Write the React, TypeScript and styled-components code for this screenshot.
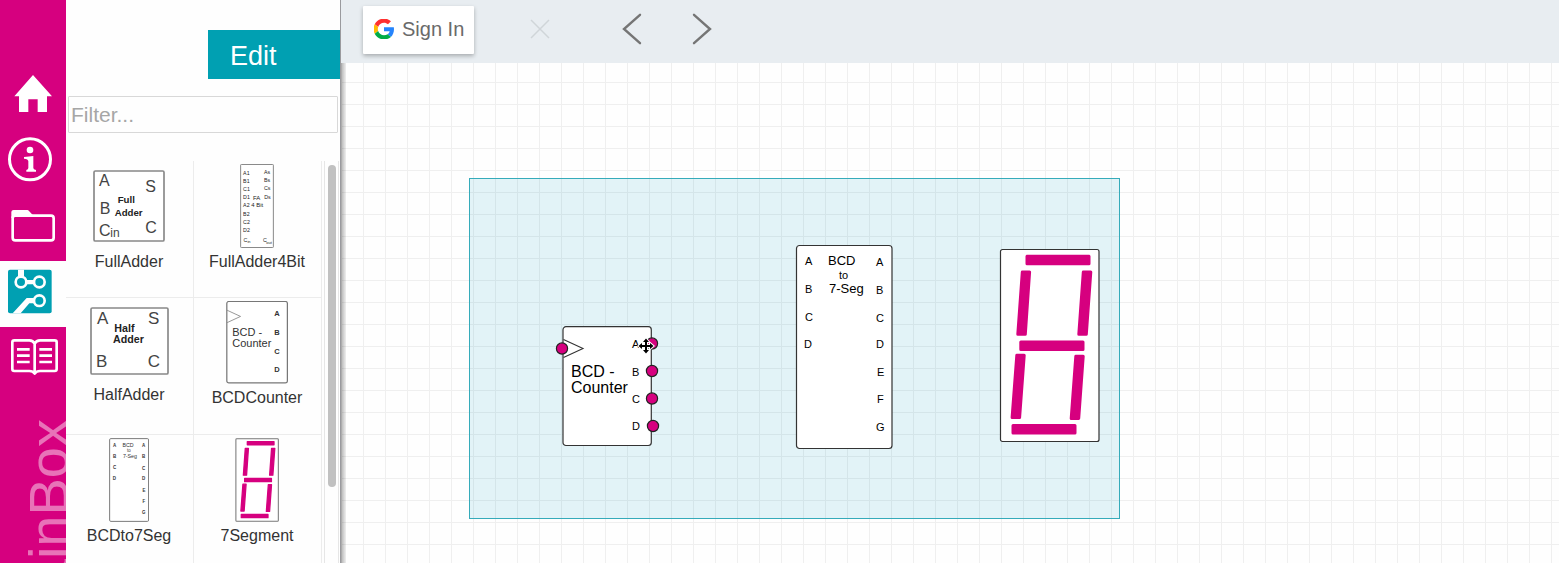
import React from "react";
import styled, { createGlobalStyle, css } from "styled-components";

const pink = "#d6007f";
const teal = "#00a0b2";
const sans = '"Liberation Sans", Arial, Helvetica, sans-serif';

const GlobalStyle = createGlobalStyle`
  *, *::before, *::after { box-sizing: border-box; }
  body { margin: 0; font-family: ${sans}; background: #fefefe; color: #333; }
  button, input { font-family: inherit; }
  svg { display: block; }
  svg text { font-family: ${sans}; }
`;

/* ---------- page frame ---------- */

const Page = styled.div`
  display: flex;
  height: 100vh;
  overflow: hidden;
`;

const Sidebar = styled.nav`
  flex: none;
  display: flex;
  flex-direction: column;
  width: 66px;
  padding-top: 63px;
  background: ${pink};
  overflow: hidden;
`;

const NavLink = styled.a<{ $active?: boolean }>`
  flex: none;
  height: 66px;
  color: #fff;
  ${(p) => p.$active && css`background: #fefefe;`}
  svg { width: 66px; height: 66px; }
`;

const Brand = styled.div`
  flex: none;
  align-self: flex-start;
  margin: 26px 0 0 17px;
  writing-mode: vertical-rl;
  transform: rotate(180deg);
  font-size: 56px;
  line-height: 64px;
  white-space: nowrap;
  color: rgba(255, 255, 255, 0.45);
`;

const Panel = styled.aside`
  flex: none;
  display: flex;
  flex-direction: column;
  width: 275px;
  padding-top: 30px;
  background: #fefefe;
  border-right: 1px solid #9a9a9e;
`;

const EditButton = styled.button`
  flex: none;
  align-self: flex-end;
  width: 132px;
  height: 49px;
  padding: 2px 22px 0;
  border: 0;
  background: ${teal};
  color: #fff;
  font-size: 27px;
  line-height: 32px;
  text-align: left;
`;

const FilterInput = styled.input`
  flex: none;
  height: 37px;
  margin: 17px 2px 28px;
  padding: 0 2px;
  border: 1px solid #d8d8d8;
  border-radius: 1px;
  background: #fefefe;
  font-size: 21px;
  color: #333;
  &::placeholder { color: #a6a6a6; opacity: 1; }
`;

const Library = styled.div`
  flex: 1;
  min-height: 0;
  display: flex;
  gap: 2px;
`;

const PartGrid = styled.ul`
  display: grid;
  grid-template-columns: 128px 128px;
  grid-auto-rows: 137px;
  margin: 0;
  padding: 0;
  list-style: none;
  overflow: hidden;
`;

const PartCell = styled.li`
  display: flex;
  flex-direction: column;
  align-items: center;
  padding: 3px 1px 0 0;
  border-right: 1px solid #ececec;
  border-bottom: 1px solid #ececec;
`;

const Thumb = styled.div<{ $height: number }>`
  display: flex;
  align-items: center;
  height: ${(p) => p.$height}px;
  margin-bottom: 4px;
`;

const PartName = styled.span`
  font-size: 16px;
  line-height: 20px;
  white-space: nowrap;
`;

const ScrollTrack = styled.div`
  width: 15px;
  padding: 4px 2px 0 3px;
  border: solid #e6e6e6;
  border-width: 0 1px;
`;

const ScrollThumb = styled.div`
  width: 8px;
  height: 81%;
  border-radius: 4px;
  background: #c1c1c1;
`;

const Main = styled.main`
  flex: 1;
  min-width: 0;
  display: flex;
  flex-direction: column;
`;

const Toolbar = styled.header`
  flex: none;
  display: flex;
  align-items: flex-start;
  height: 63px;
  padding: 6px 22px 0;
  background: #e8edf1;
`;

const SignIn = styled.button`
  display: flex;
  align-items: center;
  gap: 8px;
  height: 48px;
  padding: 0 10px 2px 11px;
  margin-right: 47px;
  border: 0;
  border-radius: 1px;
  background: #fff;
  box-shadow: 0 2px 4px rgba(0, 0, 0, 0.28);
  color: #6a6a6a;
  font-size: 20px;
  line-height: 24px;
  white-space: nowrap;
`;

const ToolButton = styled.button<{ $faint?: boolean }>`
  display: flex;
  align-items: center;
  justify-content: center;
  width: 38px;
  height: 45px;
  padding: 0;
  border: 0;
  background: none;
  color: ${(p) => (p.$faint ? "#d0d5d9" : "#757575")};
`;

const ToolGroup = styled.div`
  display: flex;
  gap: 32px;
  margin-left: 54px;
`;

/* ---------- drawing area ---------- */

const Canvas = styled.section`
  position: relative;
  flex: 1;
  overflow: hidden;
  background-color: #fefefe;
  background-image:
    linear-gradient(to right, #efefef 1px, transparent 1px),
    linear-gradient(to bottom, #efefef 1px, transparent 1px);
  background-size: 22px 22px;
  background-position: 0 19px;

  &::before {
    content: "";
    position: absolute;
    inset: 0 auto 0 0;
    width: 5px;
    background: linear-gradient(to right, rgba(0, 0, 0, 0.3), rgba(0, 0, 0, 0.06));
  }
`;

const Selection = styled.div`
  position: absolute;
  left: 128px;
  top: 115px;
  width: 651px;
  height: 341px;
  border: 1px solid #35abba;
  background: rgba(0, 152, 188, 0.11);
`;

const Node = styled.div<{ $x: number; $y: number }>`
  position: absolute;
  left: ${(p) => p.$x}px;
  top: ${(p) => p.$y}px;
`;

/* ---------- circuit parts ---------- */

type PartProps = { width: number; height: number; small?: boolean; ports?: boolean };

const lineOf = (small?: boolean) => (small ? "#777" : "#333");
const inkOf = (small?: boolean) => (small ? "#333" : "#000");

type Label = [string, number, number];

const Labels = ({ items, size, bold }: { items: Label[]; size: number; bold?: boolean }) => (
  <g fontSize={size} fontWeight={bold ? 700 : 400}>
    {items.map(([t, x, y], i) => (
      <text key={i} x={x} y={y}>{t}</text>
    ))}
  </g>
);

const Counter = ({ width, height, small, ports }: PartProps) => (
  <svg width={width} height={height} viewBox={ports ? "-8 -1 106 121" : "-1 -1 90 121"}>
    <rect x="0" y="-0.3" width="88.3" height="118.8" rx="3" fill="#fff" stroke={lineOf(small)} strokeWidth={small ? 1.8 : 1.2} />
    <path d="M0.5 12.5 L20 21.5 L0.5 30.5" fill="none" stroke={lineOf(small)} strokeWidth="1.1" />
    <g fill={inkOf(small)}>
      <Labels size={16} items={[["BCD -", 8, 50], ["Counter", 8, 66]]} />
      <Labels size={11} bold={small} items={[["A", 69, 21], ["B", 69, 49], ["C", 69, 76], ["D", 69, 103]]} />
    </g>
    {ports && (
      <g fill={pink} stroke="#222" strokeWidth="1.2">
        <circle cx="-1" cy="21.5" r="5.6" />
        <circle cx="89" cy="16.5" r="5.6" />
        <circle cx="89" cy="44" r="5.6" />
        <circle cx="89" cy="71.5" r="5.6" />
        <circle cx="90" cy="99" r="5.6" />
      </g>
    )}
  </svg>
);

const Decoder = ({ width, height, small }: PartProps) => (
  <svg width={width} height={height} viewBox="-1 -1 98 206">
    <rect x="0.5" y="0.5" width="95.5" height="203" rx="3" fill="#fff" stroke={lineOf(small)} strokeWidth={small ? 2.4 : 1.2} />
    <g fill={inkOf(small)}>
      <Labels
        size={11}
        bold={small}
        items={[
          ["A", 9, 20], ["B", 9, 48], ["C", 9, 76], ["D", 8, 103],
          ["A", 80, 21], ["B", 80, 49], ["C", 80, 77], ["D", 80, 103],
          ["E", 81, 131], ["F", 81, 158], ["G", 80, 186],
        ]}
      />
      <Labels size={13} items={[["BCD", 32, 20], ["7-Seg", 33, 48]]} />
      <Labels size={11} items={[["to", 43, 34]]} />
    </g>
  </svg>
);

const SevenSegment = ({ width, height, small }: PartProps) => (
  <svg width={width} height={height} viewBox="-1 -1 101 195">
    <rect x="0.5" y="0.5" width="98.5" height="192" rx="2" fill="#fff" stroke={lineOf(small)} strokeWidth={small ? 2.4 : 1.2} />
    <g fill={pink} stroke={pink} strokeWidth="3" strokeLinejoin="round">
      <path d="M27 7.3H89V14.7H27Z" />
      <path d="M20.8 93H83V100.4H20.8Z" />
      <path d="M13 176.5H75V184H13Z" />
      <path d="M22.3 23H29.6L25.3 85.3H17.8Z" />
      <path d="M83.3 23H90.8L86.3 85.3H78.8Z" />
      <path d="M16.8 106.3H24.2L19.6 168.6H12.1Z" />
      <path d="M75.8 107.3H83.2L78.7 169.5H71.2Z" />
    </g>
  </svg>
);

const FullAdder = ({ width, height }: PartProps) => (
  <svg width={width} height={height} viewBox="0 0 216 216">
    <rect x="3" y="3" width="210" height="210" rx="4" fill="#fff" stroke="#888" strokeWidth="5" />
    <g fill="#444">
      <Labels size={48} items={[["A", 18, 47], ["S", 157, 66], ["B", 20, 132], ["C", 157, 190], ["C", 18, 199]]} />
      <Labels size={36} items={[["in", 52, 202]]} />
    </g>
    <g fill="#222">
      <Labels size={29} bold items={[["Full", 74, 98], ["Adder", 65, 137]]} />
    </g>
  </svg>
);

const HalfAdder = ({ width, height }: PartProps) => (
  <svg width={width} height={height} viewBox="0 0 237 204">
    <rect x="3" y="3" width="231" height="198" rx="4" fill="#fff" stroke="#888" strokeWidth="5" />
    <g fill="#444">
      <Labels size={51} items={[["A", 21, 51], ["S", 174, 51], ["B", 18, 181], ["C", 173, 181]]} />
    </g>
    <g fill="#222">
      <Labels size={32} bold items={[["Half", 73, 76], ["Adder", 69, 108]]} />
    </g>
  </svg>
);

const FullAdder4Bit = ({ width, height }: PartProps) => (
  <svg width={width} height={height} viewBox="0 0 102 254">
    <rect x="1.5" y="1.5" width="99" height="251" rx="2" fill="#fff" stroke="#888" strokeWidth="3" />
    <g fill="#222">
      <Labels
        size={16}
        items={[
          ["A1", 9, 32], ["B1", 9, 57], ["C1", 9, 81], ["D1", 9, 106], ["A2", 9, 130],
          ["B2", 9, 157], ["C2", 9, 181], ["D2", 9, 207], ["C", 10, 236],
          ["As", 72, 31], ["Bs", 72, 55], ["Cs", 72, 80], ["Ds", 73, 106], ["C", 69, 236],
        ]}
      />
      <Labels size={18} items={[["FA", 39, 109], ["4 Bit", 34, 130]]} />
      <Labels size={12} items={[["in", 22, 239], ["out", 79, 243]]} />
    </g>
  </svg>
);

const parts = [
  { name: "FullAdder", area: 84, art: <FullAdder width={72} height={72} /> },
  { name: "FullAdder4Bit", area: 84, art: <FullAdder4Bit width={34} height={84} /> },
  { name: "HalfAdder", area: 80, art: <HalfAdder width={79} height={68} /> },
  { name: "BCDCounter", area: 83, art: <Counter width={62} height={83} small /> },
  { name: "BCDto7Seg", area: 84, art: <Decoder width={40} height={84} small /> },
  { name: "7Segment", area: 84, art: <SevenSegment width={44} height={84} small /> },
];

/* ---------- icons ---------- */

const HomeIcon = () => (
  <svg viewBox="0 0 198 198" fill="currentColor" aria-hidden="true">
    <path d="M99 36L156 100H141V147H113V109H85V147H57V100H43Z" />
  </svg>
);

const InfoIcon = () => (
  <svg viewBox="0 0 198 198" fill="currentColor" aria-hidden="true">
    <circle cx="90" cy="91" r="61.5" fill="none" stroke="currentColor" strokeWidth="9" />
    <circle cx="90" cy="63" r="10" />
    <path d="M72 84Q88 83 100 81V117Q100 122 108 123V128H79V123Q85 122 85 117V97Q85 90 72 89Z" />
  </svg>
);

const FolderIcon = () => (
  <svg viewBox="0 0 198 198" fill="none" stroke="currentColor" strokeWidth="8" aria-hidden="true">
    <rect x="38" y="62" width="123" height="74" rx="8" />
    <path d="M34 70V51Q34 45 41 45H82Q85 45 87 48L99 61V66H41Z" fill="currentColor" stroke="none" />
  </svg>
);

const CircuitIcon = () => (
  <svg viewBox="0 0 198 198" aria-hidden="true">
    <rect x="24" y="26" width="131" height="131" rx="6" fill={teal} />
    <path d="M54 26H72V50H54Z M76 57H106V70H76Z M106 111H80L38 157H62L88 127H106Z" fill="#fefefe" />
    <g fill={teal} stroke="#fefefe" strokeWidth="8">
      <circle cx="63" cy="63" r="16" />
      <circle cx="118" cy="63" r="16" />
      <circle cx="118" cy="119" r="16" />
    </g>
  </svg>
);

const BookIcon = () => (
  <svg viewBox="0 0 198 198" fill="none" stroke="currentColor" strokeWidth="8" strokeLinejoin="round" aria-hidden="true">
    <path d="M104 50Q99 40 88 40H43Q37 40 37 46V126Q37 132 43 132H88Q99 132 104 140Q109 132 120 132H164Q170 132 170 126V46Q170 40 164 40H120Q109 40 104 50V138" />
    <path d="M51 67H89M51 86H89M51 105H89M118 67H156M118 86H156M118 105H156" />
  </svg>
);

const GoogleIcon = () => (
  <svg width="20" height="20" viewBox="1 1 46 46" aria-hidden="true">
    <path fill="#ff302f" d="M24 9.5c3.54 0 6.71 1.22 9.21 3.6l6.85-6.85C35.9 2.38 30.47 0 24 0 14.62 0 6.51 5.38 2.56 13.22l7.98 6.19C12.43 13.72 17.74 9.5 24 9.5z" />
    <path fill="#2684fc" d="M46.98 24.55c0-1.57-.15-3.09-.38-4.55H24v9.02h12.94c-.58 2.96-2.26 5.48-4.78 7.18l7.73 6c4.51-4.18 7.09-10.36 7.09-17.65z" />
    <path fill="#ffba00" d="M10.53 28.59c-.48-1.45-.76-2.99-.76-4.59s.27-3.14.76-4.59l-7.98-6.19C.92 16.46 0 20.12 0 24c0 3.88.92 7.54 2.56 10.78l7.97-6.19z" />
    <path fill="#00ac47" d="M24 48c6.48 0 11.93-2.13 15.89-5.81l-7.73-6c-2.15 1.45-4.92 2.3-8.16 2.3-6.26 0-11.57-4.22-13.47-9.91l-7.98 6.19C6.51 42.62 14.62 48 24 48z" />
  </svg>
);

const CloseIcon = () => (
  <svg width="20" height="20" viewBox="0 0 20 20" stroke="currentColor" strokeWidth="1.5" aria-hidden="true">
    <path d="M1 1L19 19M19 1L1 19" />
  </svg>
);

const ChevronIcon = ({ next }: { next?: boolean }) => (
  <svg width="20" height="32" viewBox="0 0 20 32" fill="none" stroke="currentColor" strokeWidth="2.4" strokeLinecap="round" aria-hidden="true">
    <path d={next ? "M2 1.8L18 16L2 30.2" : "M18 1.8L2 16L18 30.2"} />
  </svg>
);

const MoveCursor = () => (
  <svg width="18" height="18" viewBox="-9 -9 18 18" aria-hidden="true">
    <path
      d="M0 -7.5L3 -4H1V-1H4V-3L7.5 0L4 3V1H1V4H3L0 7.5L-3 4H-1V1H-4V3L-7.5 0L-4 -3V-1H-1V-4H-3Z"
      fill="#000"
      stroke="#fff"
      strokeWidth="2"
      paintOrder="stroke"
    />
  </svg>
);

export default function App() {
  return (
    <Page>
      <GlobalStyle />
      <Sidebar aria-label="Main">
        <NavLink href="#home" aria-label="Home"><HomeIcon /></NavLink>
        <NavLink href="#info" aria-label="Info"><InfoIcon /></NavLink>
        <NavLink href="#files" aria-label="Files"><FolderIcon /></NavLink>
        <NavLink href="#circuit" aria-label="Circuit" aria-current="page" $active><CircuitIcon /></NavLink>
        <NavLink href="#docs" aria-label="Documentation"><BookIcon /></NavLink>
        <Brand>BrainBox</Brand>
      </Sidebar>

      <Panel>
        <EditButton type="button">Edit</EditButton>
        <FilterInput type="text" placeholder="Filter..." aria-label="Filter" />
        <Library>
          <PartGrid>
            {parts.map((p) => (
              <PartCell key={p.name}>
                <Thumb $height={p.area}>{p.art}</Thumb>
                <PartName>{p.name}</PartName>
              </PartCell>
            ))}
          </PartGrid>
          <ScrollTrack><ScrollThumb /></ScrollTrack>
        </Library>
      </Panel>

      <Main>
        <Toolbar>
          <SignIn type="button"><GoogleIcon />Sign In</SignIn>
          <ToolButton type="button" aria-label="Delete" $faint><CloseIcon /></ToolButton>
          <ToolGroup>
            <ToolButton type="button" aria-label="Undo"><ChevronIcon /></ToolButton>
            <ToolButton type="button" aria-label="Redo"><ChevronIcon next /></ToolButton>
          </ToolGroup>
        </Toolbar>
        <Canvas>
          <Selection />
          <Node $x={214} $y={263}><Counter width={106} height={121} ports /></Node>
          <Node $x={454} $y={181}><Decoder width={98} height={206} /></Node>
          <Node $x={658} $y={185}><SevenSegment width={101} height={195} /></Node>
          <Node $x={296} $y={274}><MoveCursor /></Node>
        </Canvas>
      </Main>
    </Page>
  );
}
